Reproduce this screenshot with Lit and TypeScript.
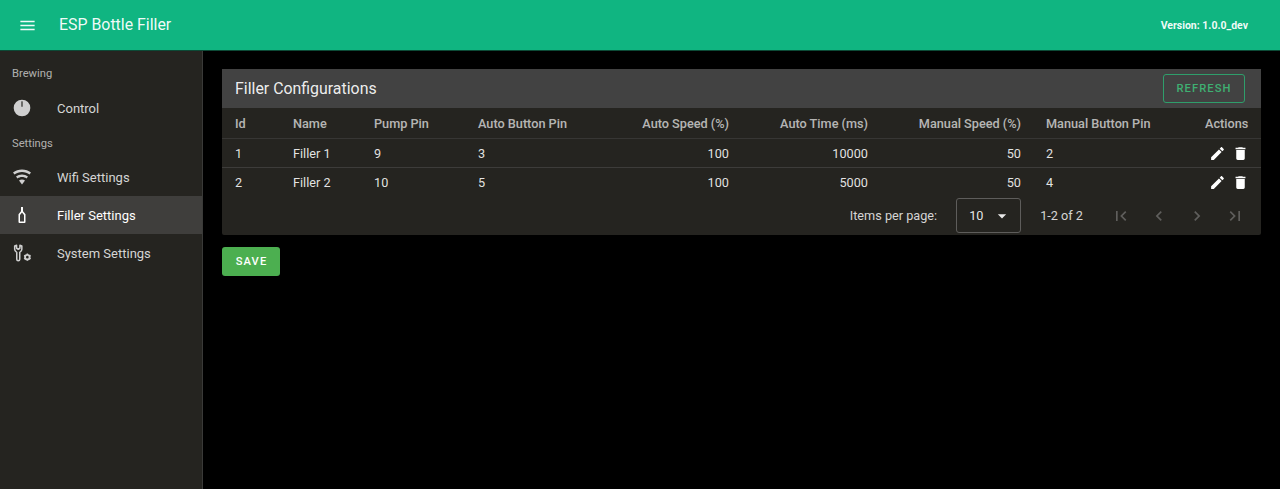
import { LitElement, html, css } from "lit";
import { customElement } from "lit/decorators.js";

const P = {
  menu: "M3 6h18v2H3V6m0 5h18v2H3v-2m0 5h18v2H3v-2z",
  gauge: "M12 2A10 10 0 1 0 12 22 10 10 0 0 0 12 2Z",
  wifi: "M12 21l3.6-4.8A6 6 0 0 0 12 15a6 6 0 0 0-3.6 1.2L12 21M12 3C7.95 3 4.21 4.34 1.2 6.6l1.8 2.4C5.5 7.12 8.62 6 12 6s6.5 1.12 9 3l1.8-2.4C19.79 4.34 16.05 3 12 3m0 6c-2.7 0-5.19.89-7.2 2.4l1.8 2.4C8.1 12.67 9.97 12 12 12s3.9.67 5.4 1.8l1.8-2.4C17.19 9.89 14.7 9 12 9z",
  pencil: "M20.71 7.04c.39-.39.39-1.04 0-1.41l-2.34-2.34c-.37-.39-1.02-.39-1.41 0l-1.84 1.83 3.75 3.75M3 17.25V21h3.75L17.81 9.93l-3.75-3.75L3 17.25z",
  trash: "M19 4h-3.5l-1-1h-5l-1 1H5v2h14M6 19a2 2 0 0 0 2 2h8a2 2 0 0 0 2-2V7H6v12z",
  first: "M18.41 16.59L13.82 12l4.59-4.59L17 6l-6 6 6 6 1.41-1.41M6 6h2v12H6V6z",
  prev: "M15.41 16.58L10.83 12l4.58-4.59L14 6l-6 6 6 6 1.41-1.42z",
  next: "M8.59 16.58L13.17 12 8.59 7.41 10 6l6 6-6 6-1.41-1.42z",
  last: "M5.59 7.41L10.18 12l-4.59 4.59L7 18l6-6-6-6-1.41 1.41M16 6h2v12h-2V6z",
  caret: "M7 10l5 5 5-5H7z",
};

const icon = (d: string) => html`<svg class="icon" viewBox="0 0 24 24"><path d=${d} fill="currentColor"></path></svg>`;

const gauge = html`<svg class="icon" viewBox="0 0 24 24"><path d=${P.gauge} fill="currentColor"></path><rect x="11.300" y="4" width="1.400" height="6.500" fill="#252420"></rect></svg>`;

const bottle = html`<svg class="icon" viewBox="0 0 24 24"><path d="M10.800 2.400h2.400v5.200l3 3.600V20.400a1.200 1.200 0 0 1-1.200 1.200H9a1.200 1.200 0 0 1-1.200-1.200V11.200l3-3.600z M9.600 12v7.800h4.800V12l-2.400-3z" fill-rule="evenodd" fill="currentColor"></path></svg>`;

const tools = html`<svg class="icon" viewBox="0 0 24 24"><path d="M3.200 3.500V7.500C3.200 9.500 4.500 10.500 5.700 11.200V19.500a1.800 1.800 0 0 0 3.600 0V11.200C10.500 10.500 11.800 9.500 11.800 7.500V3.500L9.500 2.800V6.300L7.500 7.500 5.500 6.300V2.800Z" fill="none" stroke="currentColor" stroke-width="1.800" stroke-linejoin="round"></path><circle cx="18.400" cy="17" r="2.700" fill="none" stroke="currentColor" stroke-width="2.200"></circle><path d="M18.400 12.600v1.900M18.400 19.500v1.900M14.500 14.900l1.700 1M20.600 18.100l1.700 1M14.500 19.100l1.700-1M20.600 15.900l1.700-1" stroke="currentColor" stroke-width="1.800"></path></svg>`;

const columns = [
  { label: "Id", right: false, cls: "c1" },
  { label: "Name", right: false, cls: "c2" },
  { label: "Pump Pin", right: false, cls: "c3" },
  { label: "Auto Button Pin", right: false, cls: "c4" },
  { label: "Auto Speed (%)", right: true, cls: "c5" },
  { label: "Auto Time (ms)", right: true, cls: "c6" },
  { label: "Manual Speed (%)", right: true, cls: "c7" },
  { label: "Manual Button Pin", right: false, cls: "c8" },
  { label: "Actions", right: true, cls: "c9" },
];

const cellClass = (i: number) => `${columns[i].right ? "r" : ""} ${columns[i].cls}`;

const rows = [
  ["1", "Filler 1", "9", "3", "100", "10000", "50", "2"],
  ["2", "Filler 2", "10", "5", "100", "5000", "50", "4"],
];

@customElement("app-root")
export class AppRoot extends LitElement {
  static styles = css`
    :host {
      display: block;
      width: 1280px;
      height: 489px;
      overflow: hidden;
      background: #000;
      color: #fff;
      font-family: Roboto, "Liberation Sans", sans-serif;
      font-size: 13px;
    }
    .icon { display: block; width: 22px; height: 22px; flex: none; }
    .bar {
      height: 50px;
      background: #10b581;
      display: flex;
      align-items: center;
      padding: 0 32px 0 17.500px;
      border-bottom: 1px solid #0c4a36;
      color: rgba(255,255,255,.95);
    }
    .bar .icon { width: 19px; height: 19px; }
    .title { margin-left: 22.500px; font-size: 15.900px; font-weight: 400; line-height: 50px; }
    .version { margin-left: auto; font-size: 10.500px; font-weight: 700; }
    .body { display: flex; height: 438px; }
    .side {
      width: 202px;
      flex: none;
      background: #252420;
      border-right: 1px solid #3a3a38;
      padding-top: 4px;
    }
    .sub {
      height: 34px;
      line-height: 38px;
      padding-left: 12px;
      font-size: 11.200px;
      color: rgba(255,255,255,.65);
    }
    .sub.second { height: 31px; line-height: 33px; }
    .item {
      height: 38px;
      display: flex;
      align-items: center;
      padding-left: 12px;
      color: rgba(255,255,255,.82);
      font-size: 13px;
    }
    .item .icon { width: 20px; height: 20px; margin-right: 25px; color: #cfcfcf; }
    .item.on { background: #3f3e3c; color: #fff; }
    .item.on .icon { color: #fff; }
    .main { flex: 1; padding: 18px 19px 0; }
    .card { background: #252420; border-radius: 2px; }
    .head {
      height: 39px;
      box-sizing: border-box;
      padding: 0 16px 1px 13px;
      background: #424242;
      display: flex;
      align-items: center;
      justify-content: space-between;
    }
    .head h2 { margin: 0; font-size: 15.900px; font-weight: 400; color: rgba(255,255,255,.92); }
    .refresh {
      width: 82px;
      height: 29px;
      box-sizing: border-box;
      border: 1px solid #2f9e6b;
      border-radius: 3px;
      background: none;
      color: #3fb072;
      font: 500 11.200px Roboto, "Liberation Sans", sans-serif;
      letter-spacing: 1.050px;
      padding: 0;
    }
    table { width: 100%; table-layout: fixed; border-collapse: collapse; }
    col.c1 { width: 58px; } col.c2 { width: 81px; } col.c3 { width: 104px; }
    col.c4 { width: 130px; } col.c5 { width: 147px; } col.c6 { width: 139px; }
    col.c7 { width: 153px; } col.c8 { width: 158px; } col.c9 { width: 69px; }
    th, td { padding: 0 13px; text-align: left; white-space: nowrap; }
    th.c8, td.c8 { padding-left: 12px; }
    th {
      height: 30px;
      font-size: 12.700px;
      font-weight: 500;
      color: rgba(255,255,255,.68);
      border-bottom: 1px solid #373634;
    }
    td {
      height: 28px;
      font-size: 12.700px;
      color: rgba(255,255,255,.88);
      border-bottom: 1px solid #3d3c3a;
    }
    tr:last-child td { border-bottom: 0; }
    .r { text-align: right; }
    .acts { display: flex; justify-content: flex-end; gap: 6px; margin-right: -1px; color: #fff; }
    .acts .icon { width: 17px; height: 17px; }
    .foot {
      height: 39px;
      display: flex;
      align-items: center;
      justify-content: flex-end;
      padding-right: 16px;
      font-size: 12.700px;
      color: rgba(255,255,255,.82);
    }
    .select {
      width: 65px;
      height: 35px;
      box-sizing: border-box;
      border: 1px solid #5e5d5b;
      border-radius: 3px;
      margin: 0 19px;
      display: flex;
      align-items: center;
      justify-content: space-between;
      padding: 0 8px 0 12px;
      color: rgba(255,255,255,.9);
    }
    .select .icon { width: 20px; height: 20px; }
    .pager { display: flex; margin-left: 28px; gap: 18px; color: #5f5e5c; }
    .pager .icon { width: 20px; height: 20px; }
    .save {
      display: block;
      margin-top: 12px;
      width: 58px;
      height: 29px;
      border: 0;
      padding: 0 0 0 1px;
      border-radius: 3px;
      background: #4caf50;
      color: #fff;
      font: 500 11.200px Roboto, "Liberation Sans", sans-serif;
      letter-spacing: 1.100px;
    }
  `;

  render() {
    return html`
      <header class="bar">
        ${icon(P.menu)}
        <div class="title">ESP Bottle Filler</div>
        <div class="version">Version: 1.0.0_dev</div>
      </header>
      <div class="body">
        <nav class="side">
          <div class="sub">Brewing</div>
          <div class="item">${gauge}Control</div>
          <div class="sub second">Settings</div>
          <div class="item">${icon(P.wifi)}Wifi Settings</div>
          <div class="item on">${bottle}Filler Settings</div>
          <div class="item">${tools}System Settings</div>
        </nav>
        <main class="main">
          <section class="card">
            <div class="head">
              <h2>Filler Configurations</h2>
              <button class="refresh">REFRESH</button>
            </div>
            <table>
              <colgroup>${columns.map((c) => html`<col class=${c.cls} />`)}</colgroup>
              <thead>
                <tr>${columns.map((c, i) => html`<th class=${cellClass(i)}>${c.label}</th>`)}</tr>
              </thead>
              <tbody>
                ${rows.map(
                  (r) => html`<tr>
                    ${r.map((v, i) => html`<td class=${cellClass(i)}>${v}</td>`)}
                    <td><div class="acts">${icon(P.pencil)}${icon(P.trash)}</div></td>
                  </tr>`
                )}
              </tbody>
            </table>
            <div class="foot">
              <span>Items per page:</span>
              <div class="select"><span>10</span>${icon(P.caret)}</div>
              <span>1-2 of 2</span>
              <div class="pager">${icon(P.first)}${icon(P.prev)}${icon(P.next)}${icon(P.last)}</div>
            </div>
          </section>
          <button class="save">SAVE</button>
        </main>
      </div>
    `;
  }
}
